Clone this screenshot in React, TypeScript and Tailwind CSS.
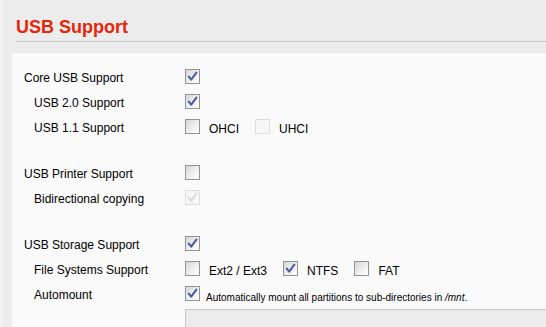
import type { ReactNode } from 'react';

function Box({ checked = false, disabled = false }: { checked?: boolean; disabled?: boolean }) {
  return (
    <span
      className={
        disabled
          ? 'flex w-[15px] h-[15px] shrink-0 items-center justify-center border border-[#dedede] bg-[#f6f6f6]'
          : 'flex w-[15px] h-[15px] shrink-0 items-center justify-center border border-[#939393] bg-linear-to-br from-[#d6d6d6] via-[#ededed] to-white'
      }
    >
      {checked && (
        <svg width="13" height="13" viewBox="0 0 13 13">
          <path
            d="M2.8 6.6 L5.2 9.6 L10.4 2.6"
            fill="none"
            stroke={disabled ? '#dadada' : '#4a5ea4'}
            strokeWidth="2.1"
            strokeLinecap="round"
            strokeLinejoin="round"
          />
        </svg>
      )}
    </span>
  );
}

function Row({ label, sub = false, children }: { label: string; sub?: boolean; children: ReactNode }) {
  return (
    <div className="flex h-[25px] items-center">
      <div className={sub ? 'w-[161px] pl-[10px] pt-[2px]' : 'w-[161px] pt-[2px]'}>{label}</div>
      <div className="flex items-center">{children}</div>
    </div>
  );
}

function Opt({ label, checked = false, disabled = false }: { label: string; checked?: boolean; disabled?: boolean }) {
  return (
    <div className="flex items-center mr-[16px]">
      <Box checked={checked} disabled={disabled} />
      <span className="ml-[9px] pt-[4px]">{label}</span>
    </div>
  );
}

export default function App() {
  return (
    <div
      className="w-[546px] h-[327px] overflow-hidden bg-[#ececec] border-l-2 border-[#f3f3f3] text-[12px] text-black"
      style={{ fontFamily: '"Liberation Sans", Arial, sans-serif' }}
    >
      <div className="pl-[14px] pt-[18px]">
        <h1 className="text-[18px] leading-[18px] font-bold text-[#e3270b]">USB Support</h1>
        <div className="mt-[5px] border-b border-[#c6c6c6]"></div>
      </div>

      <div className="mt-[11px] ml-[10px] h-[300px] bg-[#fafafa] pl-3 pt-[11px]">
        <Row label="Core USB Support">
          <Box checked />
        </Row>
        <Row label="USB 2.0 Support" sub>
          <Box checked />
        </Row>
        <Row label="USB 1.1 Support" sub>
          <Opt label="OHCI" />
          <Opt label="UHCI" disabled />
        </Row>

        <div className="h-[21px]"></div>
        <Row label="USB Printer Support">
          <Box />
        </Row>
        <Row label="Bidirectional copying" sub>
          <Box checked disabled />
        </Row>

        <div className="h-[21px]"></div>
        <Row label="USB Storage Support">
          <Box checked />
        </Row>
        <Row label="File Systems Support" sub>
          <Opt label="Ext2 / Ext3" />
          <Opt label="NTFS" checked />
          <Opt label="FAT" />
        </Row>
        <Row label="Automount" sub>
          <Box checked />
          <span className="ml-[6px] mt-[8px] whitespace-nowrap text-[10px]">
            Automatically mount all partitions to sub-directories in <i>/mnt</i>.
          </span>
        </Row>
        <div className="ml-[161px] mt-[3px] h-[40px] w-[400px] border border-[#c8c8c8] bg-[#ececec]"></div>
      </div>
    </div>
  );
}
